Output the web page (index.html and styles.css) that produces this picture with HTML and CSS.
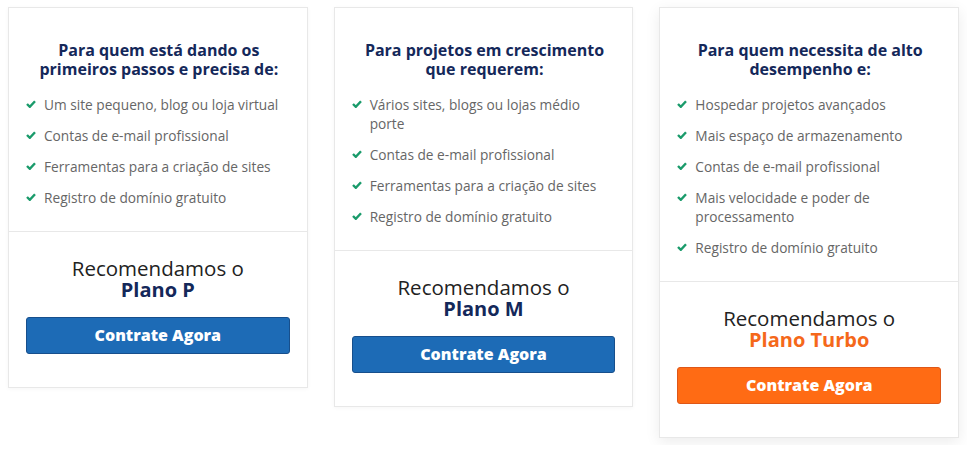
FILE: index.html
```html
<!DOCTYPE html>
<html lang="pt-BR">
<head>
    <meta charset="UTF-8">
    <meta name="viewport" content="width=device-width, initial-scale=1.0">
    <title>Planos de Hospedagem</title>
    <link rel="stylesheet" href="styles.css">
</head>
<body>

    <div class="plans">
        <!-- Plano P -->
        <div class="plan-card">
            <div class="plan-top">
                <h3>Para quem está dando os primeiros passos e precisa de:</h3>
                <ul class="features">
                    <li><svg class="check" viewBox="0 0 10 8"><polyline points="1,4 3.8,6.8 9,1.2"/></svg><span>Um site pequeno, blog ou loja virtual</span></li>
                    <li><svg class="check" viewBox="0 0 10 8"><polyline points="1,4 3.8,6.8 9,1.2"/></svg><span>Contas de e-mail profissional</span></li>
                    <li><svg class="check" viewBox="0 0 10 8"><polyline points="1,4 3.8,6.8 9,1.2"/></svg><span>Ferramentas para a criação de sites</span></li>
                    <li><svg class="check" viewBox="0 0 10 8"><polyline points="1,4 3.8,6.8 9,1.2"/></svg><span>Registro de domínio gratuito</span></li>
                </ul>
            </div>
            <div class="plan-bottom">
                <p class="recommend">Recomendamos o</p>
                <p class="plan-name">Plano P</p>
                <a href="#" class="btn">Contrate Agora</a>
            </div>
        </div>

        <!-- Plano M -->
        <div class="plan-card">
            <div class="plan-top">
                <h3>Para projetos em crescimento que requerem:</h3>
                <ul class="features">
                    <li><svg class="check" viewBox="0 0 10 8"><polyline points="1,4 3.8,6.8 9,1.2"/></svg><span>Vários sites, blogs ou lojas médio porte</span></li>
                    <li><svg class="check" viewBox="0 0 10 8"><polyline points="1,4 3.8,6.8 9,1.2"/></svg><span>Contas de e-mail profissional</span></li>
                    <li><svg class="check" viewBox="0 0 10 8"><polyline points="1,4 3.8,6.8 9,1.2"/></svg><span>Ferramentas para a criação de sites</span></li>
                    <li><svg class="check" viewBox="0 0 10 8"><polyline points="1,4 3.8,6.8 9,1.2"/></svg><span>Registro de domínio gratuito</span></li>
                </ul>
            </div>
            <div class="plan-bottom">
                <p class="recommend">Recomendamos o</p>
                <p class="plan-name">Plano M</p>
                <a href="#" class="btn">Contrate Agora</a>
            </div>
        </div>

        <!-- Plano Turbo -->
        <div class="plan-card featured">
            <div class="plan-top">
                <h3>Para quem necessita de alto desempenho e:</h3>
                <ul class="features">
                    <li><svg class="check" viewBox="0 0 10 8"><polyline points="1,4 3.8,6.8 9,1.2"/></svg><span>Hospedar projetos avançados</span></li>
                    <li><svg class="check" viewBox="0 0 10 8"><polyline points="1,4 3.8,6.8 9,1.2"/></svg><span>Mais espaço de armazenamento</span></li>
                    <li><svg class="check" viewBox="0 0 10 8"><polyline points="1,4 3.8,6.8 9,1.2"/></svg><span>Contas de e-mail profissional</span></li>
                    <li><svg class="check" viewBox="0 0 10 8"><polyline points="1,4 3.8,6.8 9,1.2"/></svg><span>Mais velocidade e poder de processamento</span></li>
                    <li><svg class="check" viewBox="0 0 10 8"><polyline points="1,4 3.8,6.8 9,1.2"/></svg><span>Registro de domínio gratuito</span></li>
                </ul>
            </div>
            <div class="plan-bottom">
                <p class="recommend">Recomendamos o</p>
                <p class="plan-name">Plano Turbo</p>
                <a href="#" class="btn btn-orange">Contrate Agora</a>
            </div>
        </div>
    </div>

</body>
</html>
```

FILE: styles.css
```css
/* Base */
body {
    font-family: 'Open Sans', sans-serif;
    background: #fff;
    margin: 0;
    padding: 7px 8px;
}

.plans {
    display: flex;
    align-items: flex-start;
    gap: 26px;
}

/* Cards */
.plan-card {
    width: 300px;
    box-sizing: border-box;
    background-color: #fff;
    border: 1px solid #e8e8e8;
    box-shadow: 0 1px 4px rgba(0, 0, 0, 0.04);
}

.plan-card.featured {
    box-shadow: 0 4px 14px rgba(0, 0, 0, 0.08);
}

.plan-top {
    padding: 33px 20px 24px 17px;
}

.plan-top h3 {
    margin: 0 0 16px;
    padding: 0 6px 0 11px;
    text-align: center;
    font-size: 16px;
    font-weight: 700;
    line-height: 19px;
    color: #14285a;
}

.features {
    list-style: none;
    margin: 0;
    padding: 0;
}

.features li {
    display: flex;
    gap: 8px;
    margin-bottom: 12px;
    font-size: 13.7px;
    font-weight: 400;
    line-height: 19px;
    color: #666;
}

.features li:last-child {
    margin-bottom: 0;
}

.check {
    flex: none;
    width: 10px;
    height: 8px;
    margin-top: 5px;
    fill: none;
    stroke: #1a9b6b;
    stroke-width: 2.4;
}

/* Recommendation */
.plan-bottom {
    border-top: 1px solid #e8e8e8;
    padding: 26px 17px 33px;
    text-align: center;
}

.recommend {
    margin: 0;
    font-size: 20.5px;
    line-height: 21px;
    color: #222;
}

.plan-name {
    margin: 0 0 17px;
    font-size: 20px;
    font-weight: 700;
    line-height: 21px;
    color: #14285a;
}

.featured .plan-name {
    color: #f5681a;
}

.btn {
    display: block;
    height: 37px;
    line-height: 35px;
    box-sizing: border-box;
    background-color: #1d6bb6;
    border: 1px solid #174f8c;
    border-radius: 3px;
    color: #fff;
    font-size: 16px;
    font-weight: 800;
    text-decoration: none;
}

.btn-orange {
    background-color: #ff6b14;
    border-color: #de5718;
}
```
